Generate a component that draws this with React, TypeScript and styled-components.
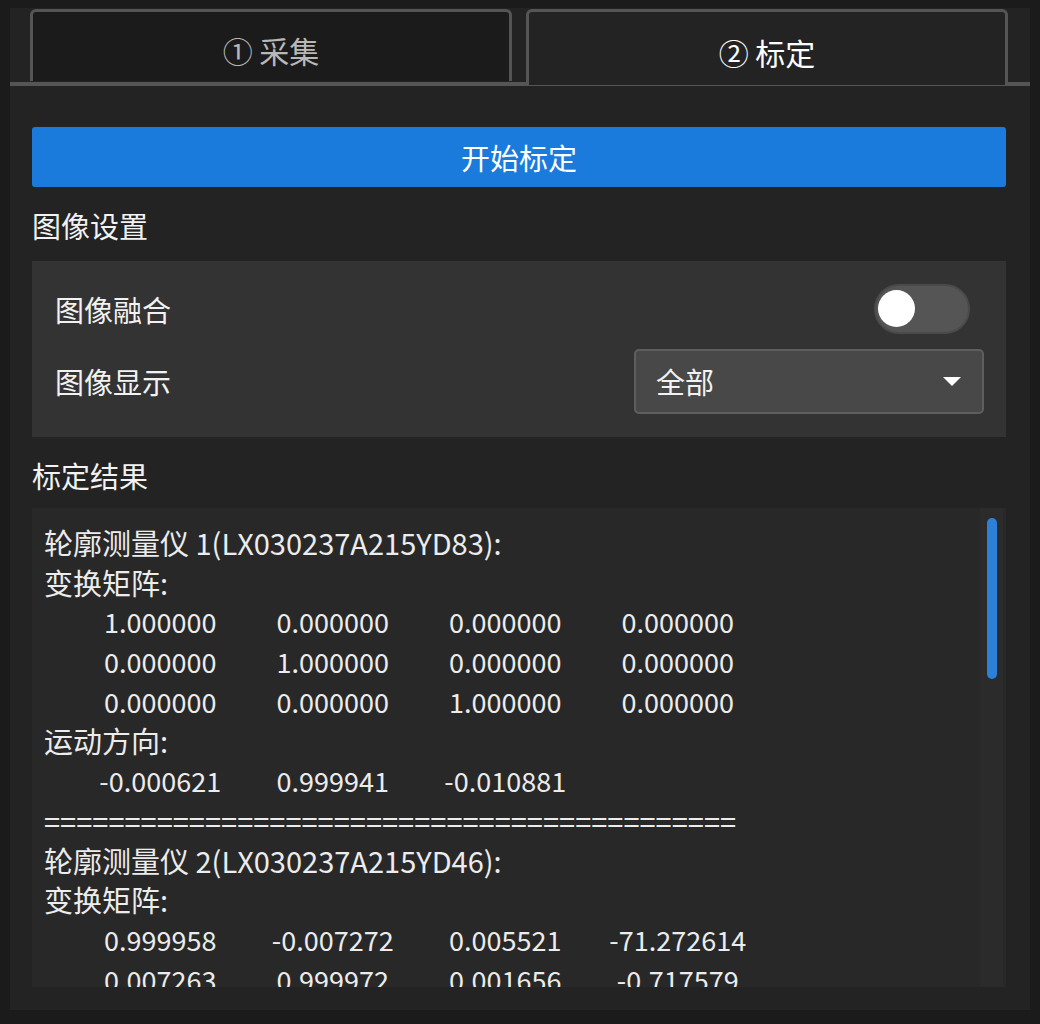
import React from 'react';
import styled, { createGlobalStyle } from 'styled-components';

const GlobalStyle = createGlobalStyle`
  html, body {
    margin: 0;
    padding: 0;
    background: #1b1b1b;
  }
  body {
    font-family: "Noto Sans CJK SC", "Noto Sans", sans-serif;
    color: #ededed;
  }
`;

const Page = styled.div`
  padding: 8px 10px 14px;
`;

const Panel = styled.div`
  height: 1002px;
  background: #232323;
  display: flex;
  flex-direction: column;
`;

const TabBar = styled.div`
  height: 73px;
  display: flex;
  gap: 14px;
  padding: 1px 22px 0 20px;
  border-bottom: 4px solid #555;
`;

const Tab = styled.div<{ $active?: boolean }>`
  box-sizing: border-box;
  flex: 0 0 482px;
  height: ${p => (p.$active ? '76px' : '72px')};
  margin-bottom: ${p => (p.$active ? '-4px' : '0')};
  display: flex;
  align-items: center;
  justify-content: center;
  padding-top: 7px;
  border: 3px solid #555;
  border-bottom: none;
  border-radius: 6px 6px 0 0;
  background: ${p => (p.$active ? '#232323' : '#1b1b1b')};
  color: ${p => (p.$active ? '#ffffff' : '#b8b8b8')};
  font-size: 30px;
`;

const Body = styled.div`
  flex: 1;
  min-height: 0;
  display: flex;
  flex-direction: column;
  padding: 41px 24px 23px 22px;
`;

const PrimaryButton = styled.button`
  height: 60px;
  border: none;
  border-radius: 3px;
  background: #1a7bdc;
  color: #fff;
  font-family: inherit;
  font-size: 29px;
`;

const SectionLabel = styled.div<{ $below: number }>`
  margin: 18px 0 ${p => p.$below}px;
  line-height: 40px;
  font-size: 29px;
  color: #f2f2f2;
`;

const Group = styled.div`
  background: #333333;
  padding: 23px 22px 23px 23px;
  display: flex;
  flex-direction: column;
  gap: 15px;
`;

const Row = styled.div<{ $height?: number }>`
  display: flex;
  align-items: center;
  justify-content: space-between;
  height: ${p => (p.$height ? `${p.$height}px` : 'auto')};
  font-size: 29px;
  color: #f2f2f2;
`;

const Track = styled.div`
  box-sizing: border-box;
  width: 96px;
  height: 50px;
  margin-right: 14px;
  border-radius: 25px;
  background: #555;
  border: 2px solid #4a4a4a;
  display: flex;
  align-items: center;
  padding-left: 2px;
`;

const Knob = styled.div`
  width: 37px;
  height: 37px;
  border-radius: 50%;
  background: #fff;
`;

const Select = styled.div`
  box-sizing: border-box;
  width: 350px;
  height: 65px;
  padding: 0 20px;
  display: flex;
  align-items: center;
  justify-content: space-between;
  background: #484848;
  border: 2px solid #5e5e5e;
  border-radius: 5px;
`;

const Results = styled.div`
  height: 480px;
  display: flex;
  background: #282828;
  overflow: hidden;
`;

const ResultText = styled.div`
  flex: 1;
  padding: 15px 12px;
  font-size: 29px;
  line-height: 39.7px;
  color: #ececec;
  white-space: pre;
  overflow: hidden;
`;

const Values = styled.div`
  display: grid;
  grid-template-columns: repeat(4, 172.5px);
  padding-left: 30px;
  justify-items: center;
  font-size: 27px;
`;

const ScrollTrack = styled.div`
  width: 23px;
  margin-right: 3px;
  background: #2b2b2b;
  display: flex;
  justify-content: center;
  padding-top: 10px;
`;

const Thumb = styled.div`
  width: 10px;
  height: 161px;
  border-radius: 5px;
  background: #2d80d8;
`;

const Caret = () => (
  <svg width="20" height="11" viewBox="0 0 20 11">
    <path d="M1 1 L19 1 L10 10 Z" fill="#fff" />
  </svg>
);

type Device = {
  name: string;
  matrix: string[][];
  direction: string[];
};

const devices: Device[] = [
  {
    name: '轮廓测量仪 1(LX030237A215YD83):',
    matrix: [
      ['1.000000', '0.000000', '0.000000', '0.000000'],
      ['0.000000', '1.000000', '0.000000', '0.000000'],
      ['0.000000', '0.000000', '1.000000', '0.000000'],
    ],
    direction: ['-0.000621', '0.999941', '-0.010881'],
  },
  {
    name: '轮廓测量仪 2(LX030237A215YD46):',
    matrix: [
      ['0.999958', '-0.007272', '0.005521', '-71.272614'],
      ['0.007263', '0.999972', '0.001656', '-0.717579'],
      ['-0.005533', '-0.001644', '0.999983', '2.418765'],
    ],
    direction: ['-0.000587', '0.999952', '-0.009764'],
  },
];

const DeviceBlock = ({ device, last }: { device: Device; last: boolean }) => (
  <>
    <div>{device.name}</div>
    <div>变换矩阵:</div>
    {device.matrix.map((row, i) => (
      <Values key={i}>
        {row.map((v, j) => (
          <span key={j}>{v}</span>
        ))}
      </Values>
    ))}
    <div>运动方向:</div>
    <Values>
      {device.direction.map((v, j) => (
        <span key={j}>{v}</span>
      ))}
    </Values>
    {!last && <div>{'='.repeat(43)}</div>}
  </>
);

export default function App() {
  return (
    <>
      <GlobalStyle />
      <Page>
        <Panel>
          <TabBar>
            <Tab>① 采集</Tab>
            <Tab $active>② 标定</Tab>
          </TabBar>
          <Body>
            <PrimaryButton>开始标定</PrimaryButton>
            <SectionLabel $below={16}>图像设置</SectionLabel>
            <Group>
              <Row $height={50}>
                <span>图像融合</span>
                <Track>
                  <Knob />
                </Track>
              </Row>
              <Row>
                <span>图像显示</span>
                <Select>
                  <span>全部</span>
                  <Caret />
                </Select>
              </Row>
            </Group>
            <SectionLabel $below={13}>标定结果</SectionLabel>
            <Results>
              <ResultText>
                {devices.map((d, i) => (
                  <DeviceBlock key={i} device={d} last={i === devices.length - 1} />
                ))}
              </ResultText>
              <ScrollTrack>
                <Thumb />
              </ScrollTrack>
            </Results>
          </Body>
        </Panel>
      </Page>
    </>
  );
}
